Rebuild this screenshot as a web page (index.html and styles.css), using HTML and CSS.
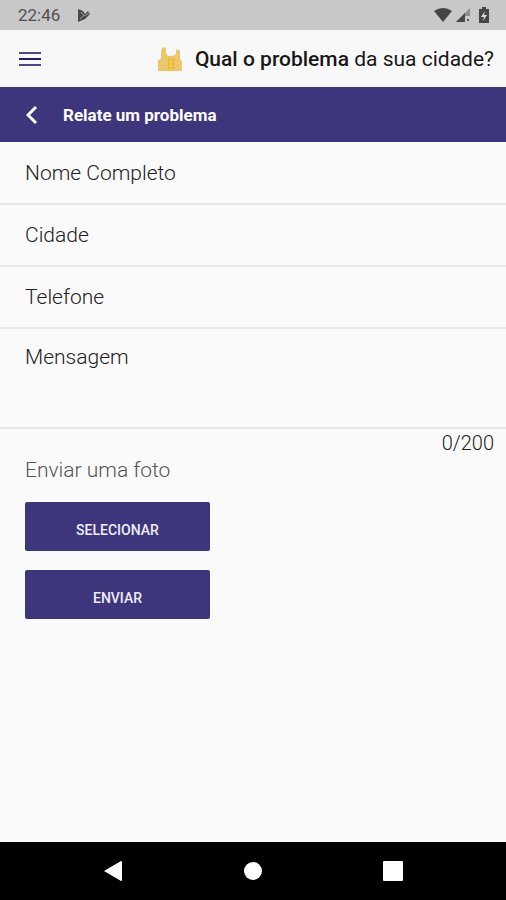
FILE: index.html
```html
<!DOCTYPE html>
<html lang="pt-BR">
  <head>
    <meta charset="UTF-8" />
    <meta name="viewport" content="width=device-width, initial-scale=1.0" />
    <title>Qual o problema da sua cidade?</title>
    <link rel="stylesheet" href="styles.css">
  </head>
  <body>
    <div class="status-bar">
      <span>22:46</span>
      <svg class="play-icon" width="14" height="14" viewBox="0 0 14 14">
        <path d="M1 1l5 2 2 3 3-3 2 3-5 5-7 3z" fill="#484848" />
        <path d="M4 4l3 4 5-3M3 11l3-3" fill="none" stroke="#a0a0a0" />
      </svg>
      <div class="status-icons">
        <svg width="20" height="16" viewBox="0 0 20 16">
          <path d="M1 4q9-6 18 0l-9 11z" fill="#454545" />
        </svg>
        <svg width="16" height="16" viewBox="0 0 16 16">
          <path d="M1 15L15 1v8h-5v6z" fill="#8e8e8e" />
          <path d="M1 15l9-9v9z" fill="#484848" />
          <path d="M12 12h2v2h-2z" fill="#555" />
        </svg>
        <svg class="battery" width="10" height="16" viewBox="0 0 10 16">
          <path d="M3 0h4v2h3v14H0V2h3z" fill="#454545" />
          <path d="M6 4L2 10h3l-1 4 4-6H5z" fill="#ddd" />
        </svg>
      </div>
    </div>

    <header class="header">
      <button type="button" class="icon-button" aria-label="Menu">
        <svg width="22" height="18" viewBox="0 0 22 18">
          <path d="M0 3h22M0 15h22" stroke="#4f4590" stroke-width="2" />
          <path d="M0 9h22" stroke="#211a7c" stroke-width="2" />
        </svg>
      </button>
      <div class="brand">
        <svg width="26" height="26" viewBox="0 0 26 26">
          <path d="M1 25V14l3-1V4l2-3 3 1v5l2 3h5l3-2V4l2-1 2 2v8l2 2v10z" fill="#edc670" />
          <path d="M10 11h8v14h-8z" fill="#efc84b" />
          <path d="M12 13v11M16 13v11" stroke="#e0b53c" stroke-width="2" stroke-dasharray="2 2" />
        </svg>
        <h1><b>Qual o problema</b> da sua cidade?</h1>
      </div>
    </header>

    <div class="title-bar">
      <button type="button" class="icon-button" aria-label="Voltar">
        <svg width="12" height="20" viewBox="0 0 12 20">
          <path d="M10 2L2 10l8 8" fill="none" stroke="#fff" stroke-width="3" />
        </svg>
      </button>
      <h2>Relate um problema</h2>
    </div>

    <form class="report-form">
      <input type="text" name="nome" placeholder="Nome Completo" aria-label="Nome Completo" />
      <input type="text" name="cidade" placeholder="Cidade" aria-label="Cidade" />
      <input type="tel" name="telefone" placeholder="Telefone" aria-label="Telefone" />
      <textarea name="mensagem" maxlength="200" placeholder="Mensagem" aria-label="Mensagem"></textarea>
      <div class="counter">0/200</div>
      <div class="actions">
        <p>Enviar uma foto</p>
        <button type="button" class="btn">SELECIONAR</button>
        <button type="button" class="btn">ENVIAR</button>
      </div>
    </form>

    <nav class="nav-bar">
      <button type="button" aria-label="Voltar">
        <svg width="20" height="22" viewBox="0 0 20 22">
          <path d="M1 11L18 1q1 0 1 1v18q0 1-1 1z" fill="#fff" />
        </svg>
      </button>
      <button type="button" aria-label="Início">
        <svg width="20" height="22" viewBox="0 0 20 22">
          <circle cx="10" cy="11" r="9" fill="#fff" />
        </svg>
      </button>
      <button type="button" aria-label="Recentes">
        <svg width="20" height="22" viewBox="0 0 20 22">
          <rect y="1" width="20" height="20" rx="1" fill="#fff" />
        </svg>
      </button>
    </nav>
  </body>
</html>
```

FILE: styles.css
```css
* {
  box-sizing: border-box;
}
body {
  display: flex;
  flex-direction: column;
  min-height: 100vh;
  margin: 0;
  background-color: #fafafa;
  color: #333;
  font-family: Roboto, sans-serif;
}
svg {
  display: block;
}
button {
  padding: 0;
  border: none;
  background: none;
  cursor: pointer;
}
.status-bar {
  display: flex;
  align-items: center;
  height: 30px;
  padding: 0 17px 0 18px;
  background-color: #c8c8c8;
  color: #505050;
  font-size: 17px;
}
.play-icon {
  margin-left: 17px;
}
.status-icons {
  display: flex;
  gap: 2px;
  margin-left: auto;
}
.battery {
  margin-left: 6px;
}
.header {
  display: flex;
  align-items: center;
  justify-content: space-between;
  height: 57px;
  padding: 0 12px 0 19px;
  background-color: #f8f8f8;
}
.brand {
  display: flex;
  align-items: center;
  gap: 12px;
}
.brand h1 {
  margin: 0;
  color: #181818;
  font-size: 21px;
  font-weight: 400;
}
.brand b {
  font-weight: 500;
}
.title-bar {
  display: flex;
  align-items: center;
  gap: 25px;
  height: 55px;
  padding: 0 26px;
  background-color: #3e367d;
  color: #fff;
}
.title-bar h2 {
  margin: 0;
  font-size: 17px;
  font-weight: 700;
}
.report-form {
  flex: 1;
  padding-top: 1px;
}
input,
textarea {
  display: block;
  width: 100%;
  height: 62px;
  padding: 0 25px;
  border: none;
  border-bottom: 2px solid #e8e8e8;
  border-radius: 0;
  background: none;
  color: #333;
  font-family: inherit;
  font-size: 21px;
  font-weight: 300;
  outline: none;
}
textarea {
  height: 100px;
  padding-top: 16px;
  resize: none;
}
input::placeholder,
textarea::placeholder {
  color: #222;
  opacity: 1;
}
.counter {
  padding: 0 12px;
  color: #222;
  font-size: 20px;
  font-weight: 300;
  line-height: 28px;
  text-align: right;
}
.actions {
  display: flex;
  flex-direction: column;
  align-items: flex-start;
  gap: 19px;
  padding: 0 25px;
}
.actions p {
  margin: 0;
  color: #555;
  font-size: 21px;
  font-weight: 300;
  line-height: 26px;
}
.btn {
  width: 185px;
  height: 49px;
  padding-top: 6px;
  border-radius: 2px;
  background-color: #3e367d;
  color: #eeedf8;
  font-family: inherit;
  font-size: 14px;
  font-weight: 500;
}
.nav-bar {
  display: flex;
  align-items: center;
  justify-content: space-around;
  height: 58px;
  padding: 0 43px;
  background-color: #000;
}
```
